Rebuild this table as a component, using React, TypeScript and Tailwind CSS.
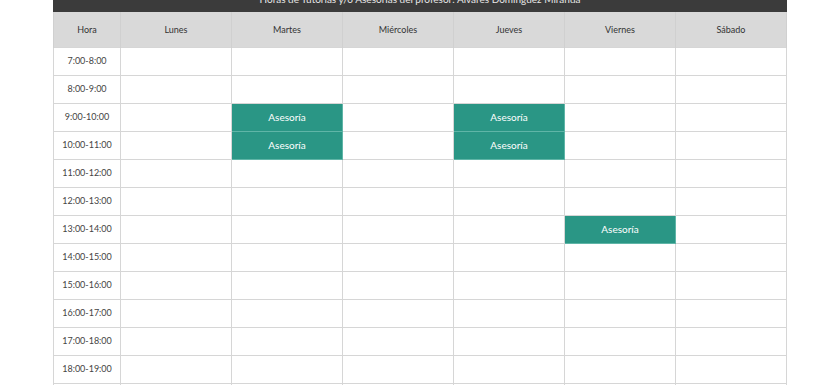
const days = ["Lunes", "Martes", "Miércoles", "Jueves", "Viernes", "Sábado"];

const hours = [
    "7:00-8:00",
    "8:00-9:00",
    "9:00-10:00",
    "10:00-11:00",
    "11:00-12:00",
    "12:00-13:00",
    "13:00-14:00",
    "14:00-15:00",
    "15:00-16:00",
    "16:00-17:00",
    "17:00-18:00",
    "18:00-19:00",
    "19:00-20:00",
];

// hour index -> day indexes with an asesoría
const booked: Record<number, number[]> = {
    2: [1, 3],
    3: [1, 3],
    6: [4],
};

export default function App() {
    return (
        <div className="w-[840px] h-[385px] overflow-hidden bg-white font-['Lato','Open_Sans',sans-serif]">
            <div className="w-[734px] ml-[53px] -mt-[14px]">
                <div className="h-[26px] bg-[#3b3b3b] flex items-center justify-center text-[10px] text-[#e6e6e6] leading-none">
                    Horas de Tutorías y/o Asesorías del profesor: Álvares Domínguez Miranda
                </div>
                <table className="w-full table-fixed border-collapse text-[9px] text-[#444]">
                    <colgroup>
                        <col className="w-[67px]" />
                        {days.map((d) => (
                            <col key={d} className="w-[111px]" />
                        ))}
                    </colgroup>
                    <thead>
                        <tr className="h-[35px] bg-[#d9d9d9] text-[#333]">
                            <th className="font-normal border-x border-[#d0d0d0]">Hora</th>
                            {days.map((d) => (
                                <th key={d} className="font-normal border-x border-[#d0d0d0]">
                                    {d}
                                </th>
                            ))}
                        </tr>
                    </thead>
                    <tbody>
                        {hours.map((h, i) => (
                            <tr key={h} className="h-[28px]">
                                <td className="text-center border border-[#d6d6d6]">{h}</td>
                                {days.map((d, j) => {
                                    const isBooked = booked[i]?.includes(j);
                                    return isBooked ? (
                                        <td
                                            key={d}
                                            className="text-center bg-[#2a9685] text-white text-[10px] border border-[#5fb5a7]"
                                        >
                                            Asesoría
                                        </td>
                                    ) : (
                                        <td key={d} className="border border-[#d6d6d6]" />
                                    );
                                })}
                            </tr>
                        ))}
                    </tbody>
                </table>
            </div>
        </div>
    );
}
